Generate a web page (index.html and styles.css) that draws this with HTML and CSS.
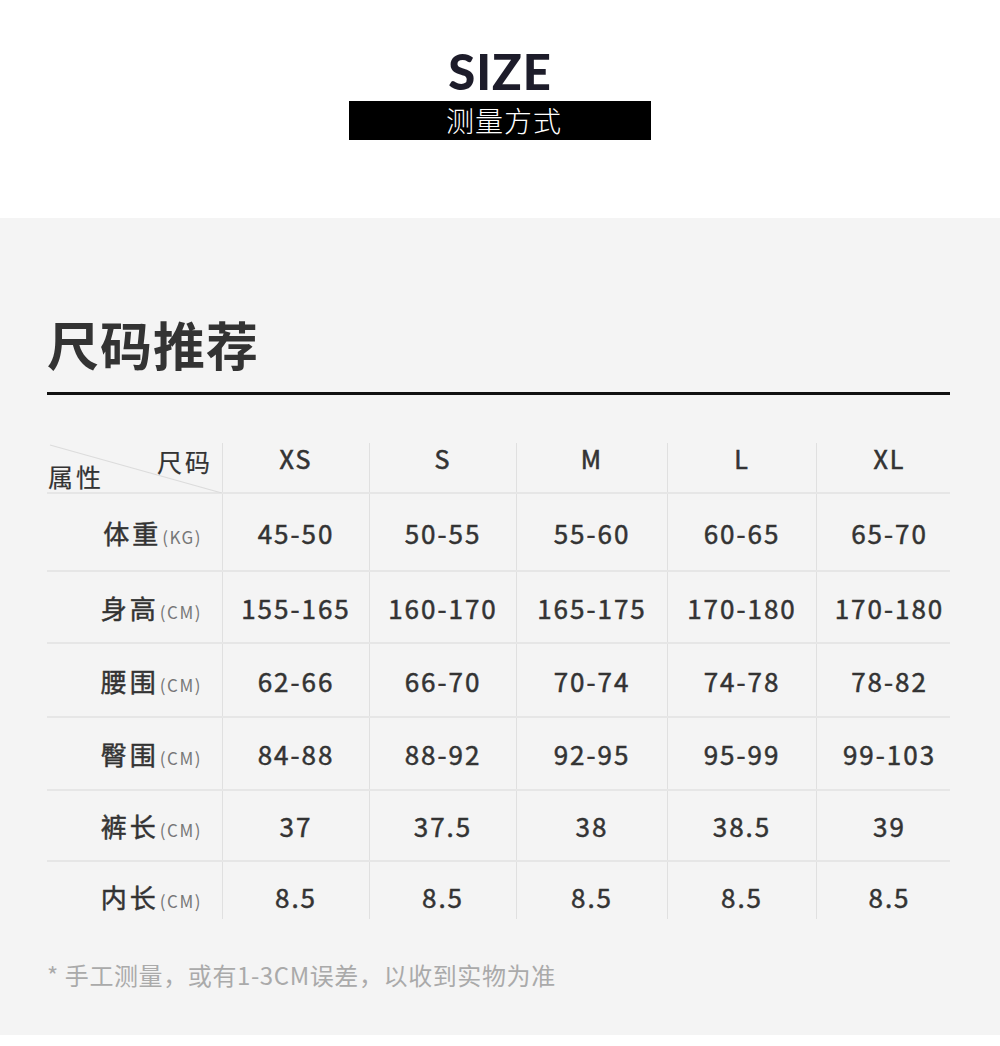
FILE: index.html
```html
<!DOCTYPE html>
<html lang="zh-CN">
<head>
<meta charset="utf-8">
<link rel="stylesheet" href="styles.css">
</head>
<body>
<header class="top">
  <div class="size-title">SIZE</div>
  <div class="size-sub">测量方式</div>
</header>
<section class="panel">
  <h1 class="panel-title">尺码推荐</h1>
  <div class="rule"></div>
  <div class="chart">
    <div class="row head">
      <div class="cell corner">
        <svg class="diag" width="175" height="50" viewBox="0 0 175 50"><line x1="3" y1="2" x2="175" y2="50" stroke="#dcdcdc" stroke-width="1.2"/></svg>
        <span class="c-size">尺码</span>
        <span class="c-attr">属性</span>
      </div>
      <div class="cell hd">XS</div>
      <div class="cell hd">S</div>
      <div class="cell hd">M</div>
      <div class="cell hd">L</div>
      <div class="cell hd">XL</div>
    </div>
    <div class="row r1">
      <div class="cell label"><b>体重</b><small>(KG)</small></div>
      <div class="cell v">45-50</div><div class="cell v">50-55</div><div class="cell v">55-60</div><div class="cell v">60-65</div><div class="cell v">65-70</div>
    </div>
    <div class="row r2">
      <div class="cell label"><b>身高</b><small>(CM)</small></div>
      <div class="cell v">155-165</div><div class="cell v">160-170</div><div class="cell v">165-175</div><div class="cell v">170-180</div><div class="cell v">170-180</div>
    </div>
    <div class="row r3">
      <div class="cell label"><b>腰围</b><small>(CM)</small></div>
      <div class="cell v">62-66</div><div class="cell v">66-70</div><div class="cell v">70-74</div><div class="cell v">74-78</div><div class="cell v">78-82</div>
    </div>
    <div class="row r4">
      <div class="cell label"><b>臀围</b><small>(CM)</small></div>
      <div class="cell v">84-88</div><div class="cell v">88-92</div><div class="cell v">92-95</div><div class="cell v">95-99</div><div class="cell v">99-103</div>
    </div>
    <div class="row r5">
      <div class="cell label"><b>裤长</b><small>(CM)</small></div>
      <div class="cell v">37</div><div class="cell v">37.5</div><div class="cell v">38</div><div class="cell v">38.5</div><div class="cell v">39</div>
    </div>
    <div class="row r6">
      <div class="cell label"><b>内长</b><small>(CM)</small></div>
      <div class="cell v">8.5</div><div class="cell v">8.5</div><div class="cell v">8.5</div><div class="cell v">8.5</div><div class="cell v">8.5</div>
    </div>
  </div>
  <p class="note">* 手工测量，或有1-3CM误差，以收到实物为准</p>
</section>
</body>
</html>
```
FILE: styles.css
```css
* { box-sizing: border-box; }
html, body { margin: 0; padding: 0; background: #fff; }
body {
  font-family: "Noto Sans CJK SC", "Noto Sans", sans-serif;
  color: #333;
  width: 1000px;
}
.top {
  height: 218px;
  display: flex;
  flex-direction: column;
  align-items: center;
  padding-top: 46px;
}
.size-title {
  font-family: Lato, "Liberation Sans", sans-serif;
  font-weight: 900;
  font-size: 49px;
  line-height: 50px;
  color: #1d1c2a;
  letter-spacing: 1px;
}
.size-sub {
  margin-top: 5px;
  width: 302px;
  height: 39px;
  background: #000;
  color: #fff;
  font-size: 28px;
  font-weight: 300;
  line-height: 39px;
  text-align: center;
  letter-spacing: 1px;
  padding-left: 8px;
}
.panel {
  background: #f4f4f4;
  height: 817px;
  padding: 0 50px 0 47px;
  display: flex;
  flex-direction: column;
}
.panel-title {
  margin: 91px 0 0 0;
  font-size: 52px;
  line-height: 70px;
  font-weight: 700;
  color: #333;
  letter-spacing: 1px;
}
.rule {
  margin-top: 13px;
  height: 3px;
  background: #111;
}
.chart {
  margin-top: 48px;
  display: flex;
  flex-direction: column;
}
.row {
  display: grid;
  grid-template-columns: 175px 147px 147px 151px 149px 134px;
}
.row + .row { border-top: 2px solid #e6e6e6; }
.head { height: 49px; }
.r1 { height: 78px; }
.r2 { height: 72px; }
.r3 { height: 74px; }
.r4 { height: 73px; }
.r5 { height: 71px; }
.r6 { height: 59px; }
.cell {
  display: flex;
  align-items: center;
  justify-content: center;
  border-left: 1px solid #e0e0e0;
  padding-top: 1px;
}
.cell:first-child { border-left: 0; }
.cell:last-child { padding-left: 12px; }
.r6 .cell { padding-top: 13px; }
.hd {
  font-size: 25px;
  font-weight: 400;
  -webkit-text-stroke: 0.6px #333;
  letter-spacing: 2px;
  align-items: flex-start;
  padding-top: 0;
  line-height: 30px;
}
.corner {
  position: relative;
  display: block;
  padding: 0;
}
.diag { position: absolute; left: 0; top: 0; }
.c-size {
  position: absolute;
  right: 9px;
  top: 2px;
  font-size: 25px;
  line-height: 32px;
  letter-spacing: 3px;
  color: #333;
  -webkit-text-stroke: 0.2px #333;
}
.c-attr {
  position: absolute;
  left: 1px;
  top: 17px;
  font-size: 25px;
  line-height: 32px;
  letter-spacing: 3px;
  color: #333;
  -webkit-text-stroke: 0.2px #333;
}
.label {
  justify-content: flex-end;
  align-items: baseline;
  align-content: center;
  flex-wrap: wrap;
  padding-right: 20px;
}
.label b {
  font-size: 26px;
  font-weight: 400;
  -webkit-text-stroke: 0.5px #333;
  letter-spacing: 3px;
  line-height: 34px;
}
.label small {
  font-size: 17px;
  color: #777;
  letter-spacing: 1.5px;
  margin-left: 1px;
}
.v {
  font-size: 26px;
  font-weight: 400;
  -webkit-text-stroke: 0.5px #333;
  letter-spacing: 2px;
  line-height: 34px;
}
.note {
  margin: 39px 0 0 0;
  font-size: 24px;
  line-height: 34px;
  color: #aaa;
  letter-spacing: 0.6px;
}
```
